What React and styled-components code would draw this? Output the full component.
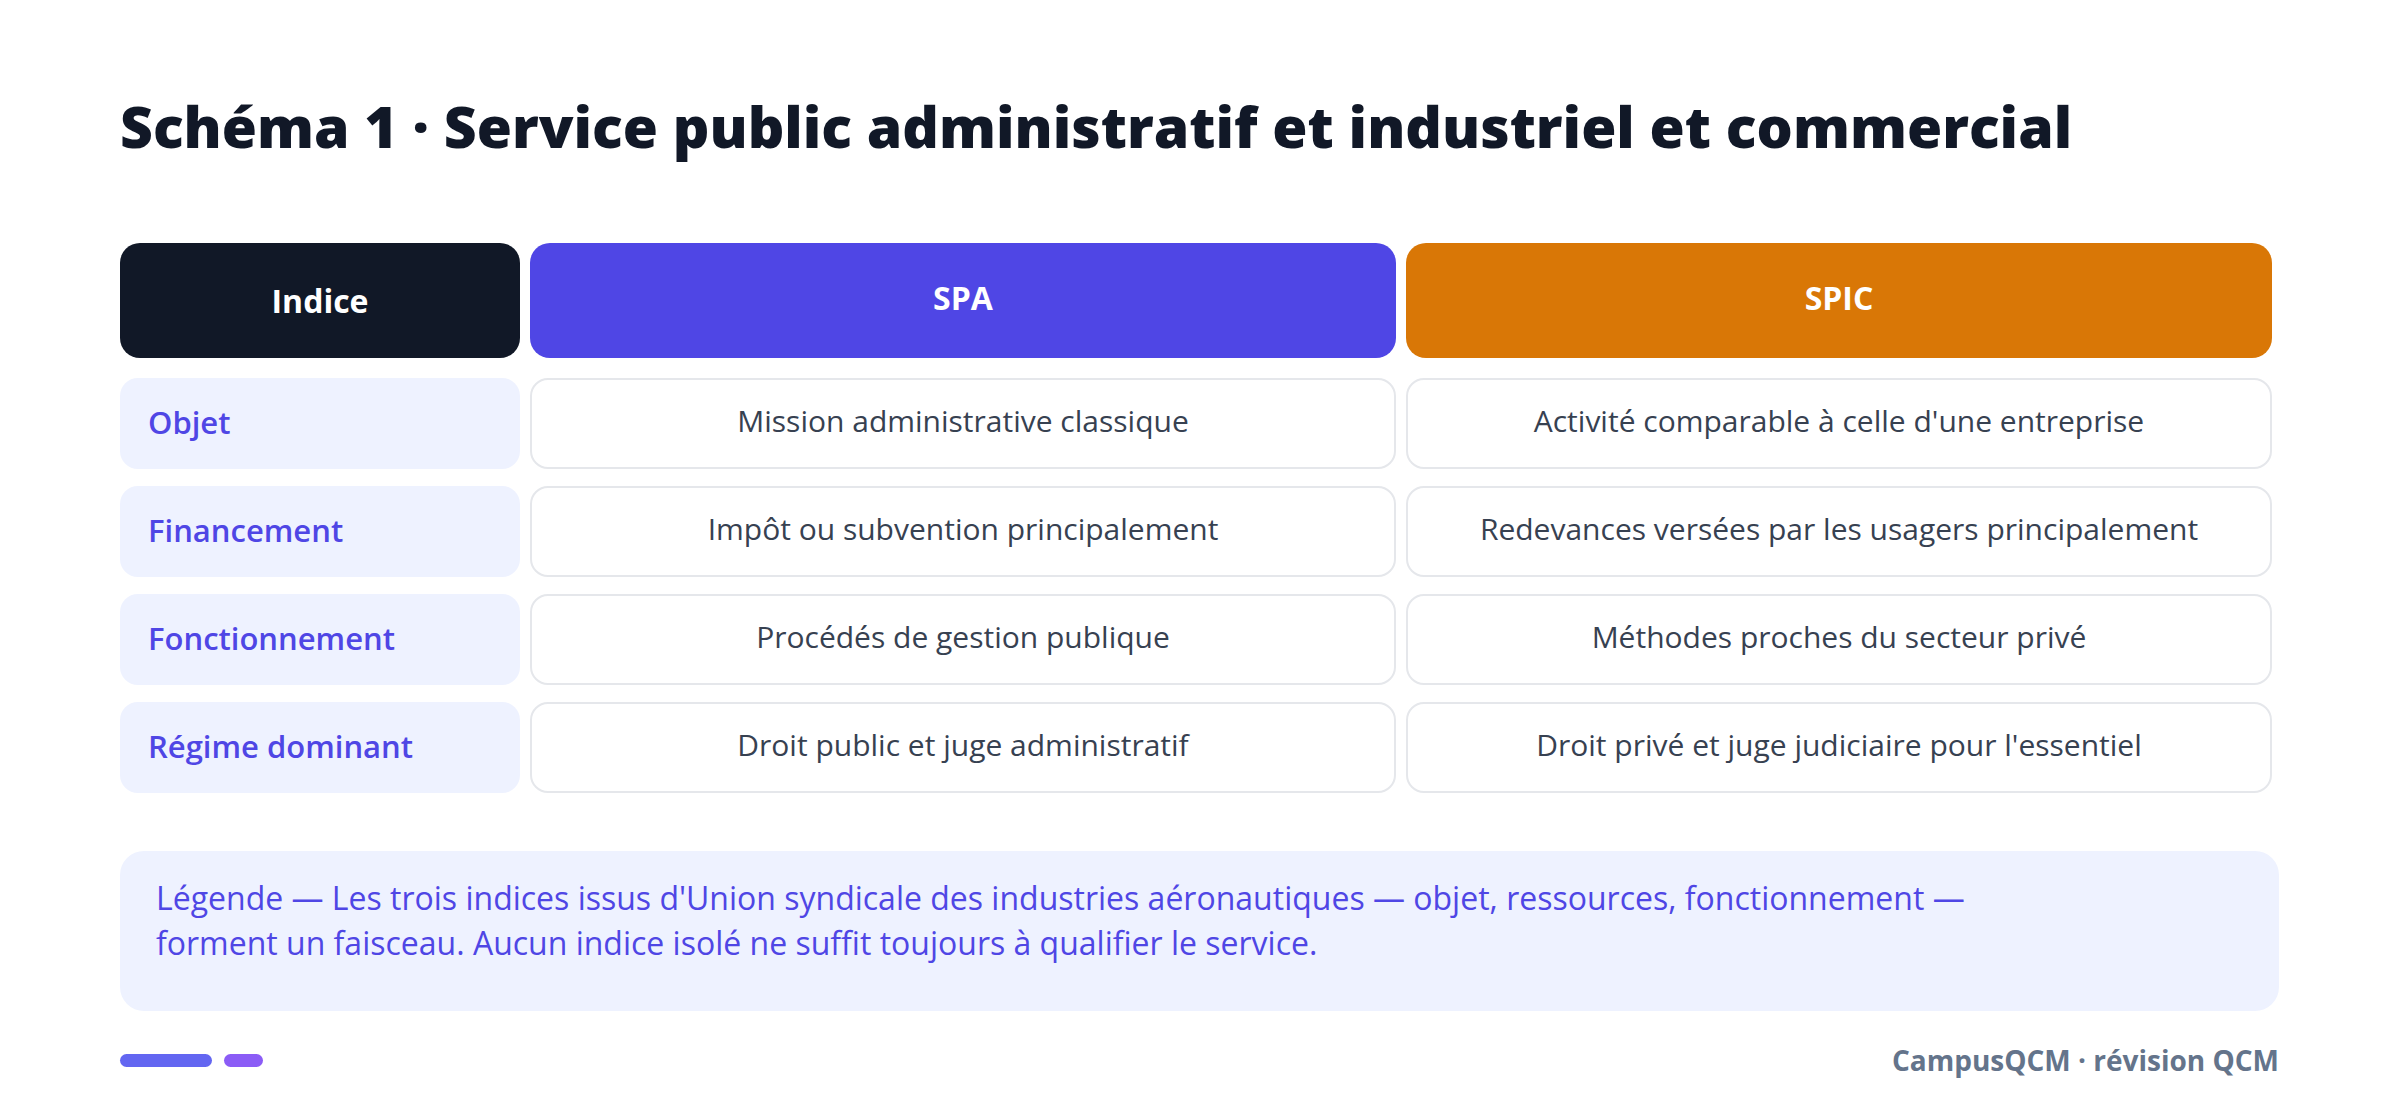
import React from "react";
import styled, { createGlobalStyle } from "styled-components";

const Global = createGlobalStyle`
  html, body {
    margin: 0;
    padding: 0;
    background: #ffffff;
  }
  body {
    font-family: "Open Sans", "Noto Sans", "Liberation Sans", sans-serif;
  }
`;

const Page = styled.div`
  width: 2400px;
  height: 1119px;
  box-sizing: border-box;
  padding: 92px 121px 0 120px;
  display: flex;
  flex-direction: column;
`;

const Title = styled.h1`
  margin: 0;
  font-size: 57px;
  line-height: 68px;
  font-weight: 800;
  color: #111827;
`;

const Table = styled.div`
  margin-top: 83px;
  margin-right: 7px;
  display: grid;
  grid-template-columns: 400px 1fr 1fr;
  column-gap: 10px;
  row-gap: 17px;
`;

const HeadCell = styled.div`
  height: 115px;
  border-radius: 20px;
  background: ${(p) => p.$bg};
  color: #ffffff;
  display: flex;
  align-items: center;
  justify-content: center;
  font-size: 32px;
  font-weight: 700;
  margin-bottom: 3px;
  padding-bottom: ${(p) => (p.$lift ? 6 : 0)}px;
  box-sizing: border-box;
`;

const Label = styled.div`
  height: 91px;
  border-radius: 18px;
  background: #eef2ff;
  color: #4f46e5;
  display: flex;
  align-items: center;
  padding-left: 28px;
  font-size: 31px;
  font-weight: 600;
  padding-bottom: 4px;
  box-sizing: border-box;
`;

const Value = styled.div`
  height: 91px;
  box-sizing: border-box;
  border: 2px solid #e5e7eb;
  border-radius: 18px;
  background: #ffffff;
  color: #374151;
  display: flex;
  align-items: center;
  justify-content: center;
  font-size: 30px;
  font-weight: 400;
  padding-bottom: 6px;
`;

const Legend = styled.div`
  margin-top: 58px;
  height: 160px;
  box-sizing: border-box;
  border-radius: 24px;
  background: #eef2ff;
  color: #4f46e5;
  padding: 24px 36px;
  font-size: 32px;
  line-height: 45px;
`;

const Footer = styled.div`
  margin-top: 30px;
  display: flex;
  align-items: center;
  justify-content: space-between;
`;

const Bars = styled.div`
  display: flex;
  gap: 12px;
  align-items: center;
`;

const Bar = styled.span`
  display: block;
  width: ${(p) => p.$w}px;
  height: 13px;
  border-radius: 7px;
  background: ${(p) => p.$c};
`;

const Brand = styled.div`
  font-size: 28px;
  font-weight: 700;
  color: #64748b;
`;

const rows = [
  ["Objet", "Mission administrative classique", "Activité comparable à celle d'une entreprise"],
  ["Financement", "Impôt ou subvention principalement", "Redevances versées par les usagers principalement"],
  ["Fonctionnement", "Procédés de gestion publique", "Méthodes proches du secteur privé"],
  ["Régime dominant", "Droit public et juge administratif", "Droit privé et juge judiciaire pour l'essentiel"],
];

export default function App() {
  return (
    <Page>
      <Global />
      <Title>Schéma 1 · Service public administratif et industriel et commercial</Title>
      <Table>
        <HeadCell $bg="#111827">Indice</HeadCell>
        <HeadCell $bg="#4f46e5" $lift>SPA</HeadCell>
        <HeadCell $bg="#d97706" $lift>SPIC</HeadCell>
        {rows.map((r) => (
          <React.Fragment key={r[0]}>
            <Label>{r[0]}</Label>
            <Value>{r[1]}</Value>
            <Value>{r[2]}</Value>
          </React.Fragment>
        ))}
      </Table>
      <Legend>
        Légende — Les trois indices issus d'Union syndicale des industries aéronautiques — objet, ressources, fonctionnement —
        <br />
        forment un faisceau. Aucun indice isolé ne suffit toujours à qualifier le service.
      </Legend>
      <Footer>
        <Bars>
          <Bar $w={92} $c="#6366f1" />
          <Bar $w={39} $c="#8b5cf6" />
        </Bars>
        <Brand>CampusQCM · révision QCM</Brand>
      </Footer>
    </Page>
  );
}
